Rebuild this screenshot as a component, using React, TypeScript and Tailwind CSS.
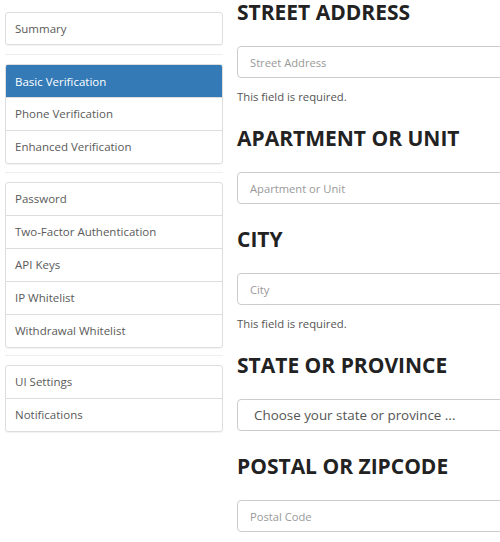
import React from 'react';

const groups: string[][] = [
  ['Summary'],
  ['Basic Verification', 'Phone Verification', 'Enhanced Verification'],
  ['Password', 'Two-Factor Authentication', 'API Keys', 'IP Whitelist', 'Withdrawal Whitelist'],
  ['UI Settings', 'Notifications'],
];

// spacing above each separator (index = group index)
const sepClass = ['', 'h-px bg-[#eee] mt-[9px] mb-[9px]', 'h-px bg-[#eee] mt-[8px] mb-[9px]', 'h-px bg-[#eee] mt-[7px] mb-[9px]'];

const fields = [
  { label: 'STREET ADDRESS', placeholder: 'Street Address', required: true },
  { label: 'APARTMENT OR UNIT', placeholder: 'Apartment or Unit', required: false },
  { label: 'CITY', placeholder: 'City', required: true },
  { label: 'STATE OR PROVINCE', placeholder: 'Choose your state or province ...', select: true, required: false },
  { label: 'POSTAL OR ZIPCODE', placeholder: 'Postal Code', required: false },
];

const App: React.FC = () => {
  const active = 'Basic Verification';

  return (
    <div className="w-[500px] h-[542px] overflow-hidden bg-white font-['Open_Sans',sans-serif]">
      <div className="flex w-[600px]">
        {/* Sidebar */}
        <div className="w-[218px] ml-[5px] pt-[12px] shrink-0">
          {groups.map((items, gi) => (
            <div key={gi}>
              {gi > 0 && <div className={sepClass[gi]}></div>}
              <div className="border border-[#ddd] rounded-[3px] shadow-[0_1px_1px_rgba(0,0,0,0.05)] overflow-hidden">
                {items.map((item, i) => (
                  <div
                    key={item}
                    className={
                      item === active
                        ? 'h-[32px] px-[9px] flex items-center text-[11.5px] bg-[#337ab7] text-white border-t border-[#337ab7]'
                        : gi === 0
                        ? 'h-[31px] px-[9px] flex items-center text-[11.5px] text-[#5a5a5a]'
                        : i === 0
                        ? 'h-[32px] px-[9px] flex items-center text-[11.5px] text-[#5a5a5a]'
                        : 'h-[33px] px-[9px] flex items-center text-[11.5px] text-[#5a5a5a] border-t border-[#ddd]'
                    }
                  >
                    {item}
                  </div>
                ))}
              </div>
            </div>
          ))}
        </div>

        {/* Form */}
        <div className="ml-[14px] w-[340px] shrink-0">
          {fields.map((f) => (
            <div key={f.label} className="mb-[23px]">
              <h2 className="h-[24px] leading-[24px] text-[21px] font-bold text-[#222]">{f.label}</h2>
              {f.select ? (
                <div className="mt-[22px] h-[32px] border border-[#ccc] rounded-[4px] pl-[16px] flex items-center text-[13.4px] text-[#555]">
                  {f.placeholder}
                </div>
              ) : (
                <input
                  className="mt-[22px] block w-full h-[32px] border border-[#ccc] rounded-[4px] px-[12px] text-[11.2px] text-[#555] placeholder:text-[#999] outline-none"
                  placeholder={f.placeholder}
                />
              )}
              {f.required && (
                <p className="mt-[12px] mb-[-1px] h-[14px] leading-[14px] text-[11.3px] text-[#555]">This field is required.</p>
              )}
            </div>
          ))}
        </div>
      </div>
    </div>
  );
};

export default App;
